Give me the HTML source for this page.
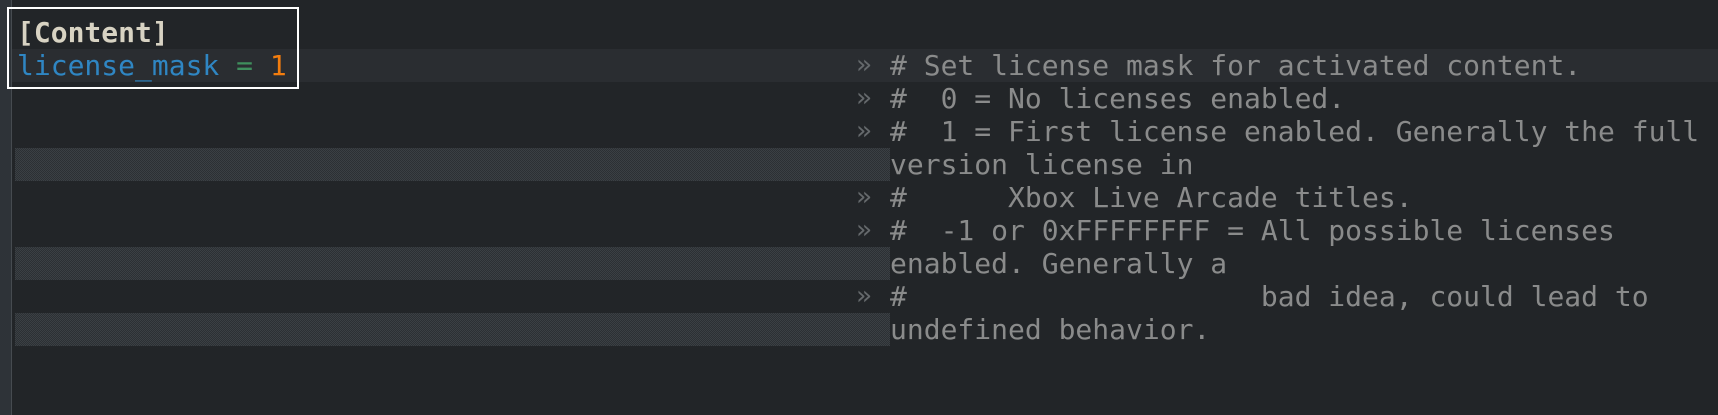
<!DOCTYPE html>
<html><head><style>
html,body{margin:0;padding:0;width:1718px;height:415px;background:#222528;overflow:hidden}
body{position:relative;font-family:"DejaVu Sans Mono","Liberation Mono",monospace;font-size:28px}
.gut{position:absolute;left:0;top:0;width:11px;height:415px;background:#2e3338;border-right:1px solid #464b50}
.cur{position:absolute;left:12px;right:0;top:49px;height:33px;background:#2a2d31}
.hatch{position:absolute;left:15px;width:875px;height:33px;background:repeating-conic-gradient(#2c3034 0 25%,#3b4044 0 50%) 0 0/2px 2px}
.l{position:absolute;height:33px;line-height:33px;white-space:pre}
.c{left:890px;color:#8a8b8b}
.ch{left:856px;color:#65696c;font-size:26px}
.box{position:absolute;left:7px;top:7px;width:288px;height:78px;border:2px solid #fff}
</style></head><body>
<div class="gut"></div>
<div class="cur"></div>
<div class="hatch" style="top:148px"></div>
<div class="hatch" style="top:247px"></div>
<div class="hatch" style="top:313px"></div>
<div class="l" style="left:17px;top:16px;color:#d8d3c3;font-weight:bold">[Content]</div>
<div class="l" style="left:17px;top:49px"><span style="color:#2f86c3">license_mask</span> <span style="color:#3f8f5d">=</span> <span style="color:#f37d0e">1</span></div>
<div class="box"></div>
<div class="l ch" style="top:49px">»</div><div class="l c" style="top:49px"># Set license mask for activated content.</div>
<div class="l ch" style="top:82px">»</div><div class="l c" style="top:82px">#  0 = No licenses enabled.</div>
<div class="l ch" style="top:115px">»</div><div class="l c" style="top:115px">#  1 = First license enabled. Generally the full</div>
<div class="l c" style="top:148px">version license in</div>
<div class="l ch" style="top:181px">»</div><div class="l c" style="top:181px">#      Xbox Live Arcade titles.</div>
<div class="l ch" style="top:214px">»</div><div class="l c" style="top:214px">#  -1 or 0xFFFFFFFF = All possible licenses</div>
<div class="l c" style="top:247px">enabled. Generally a</div>
<div class="l ch" style="top:280px">»</div><div class="l c" style="top:280px">#                     bad idea, could lead to</div>
<div class="l c" style="top:313px">undefined behavior.</div>
</body></html>
